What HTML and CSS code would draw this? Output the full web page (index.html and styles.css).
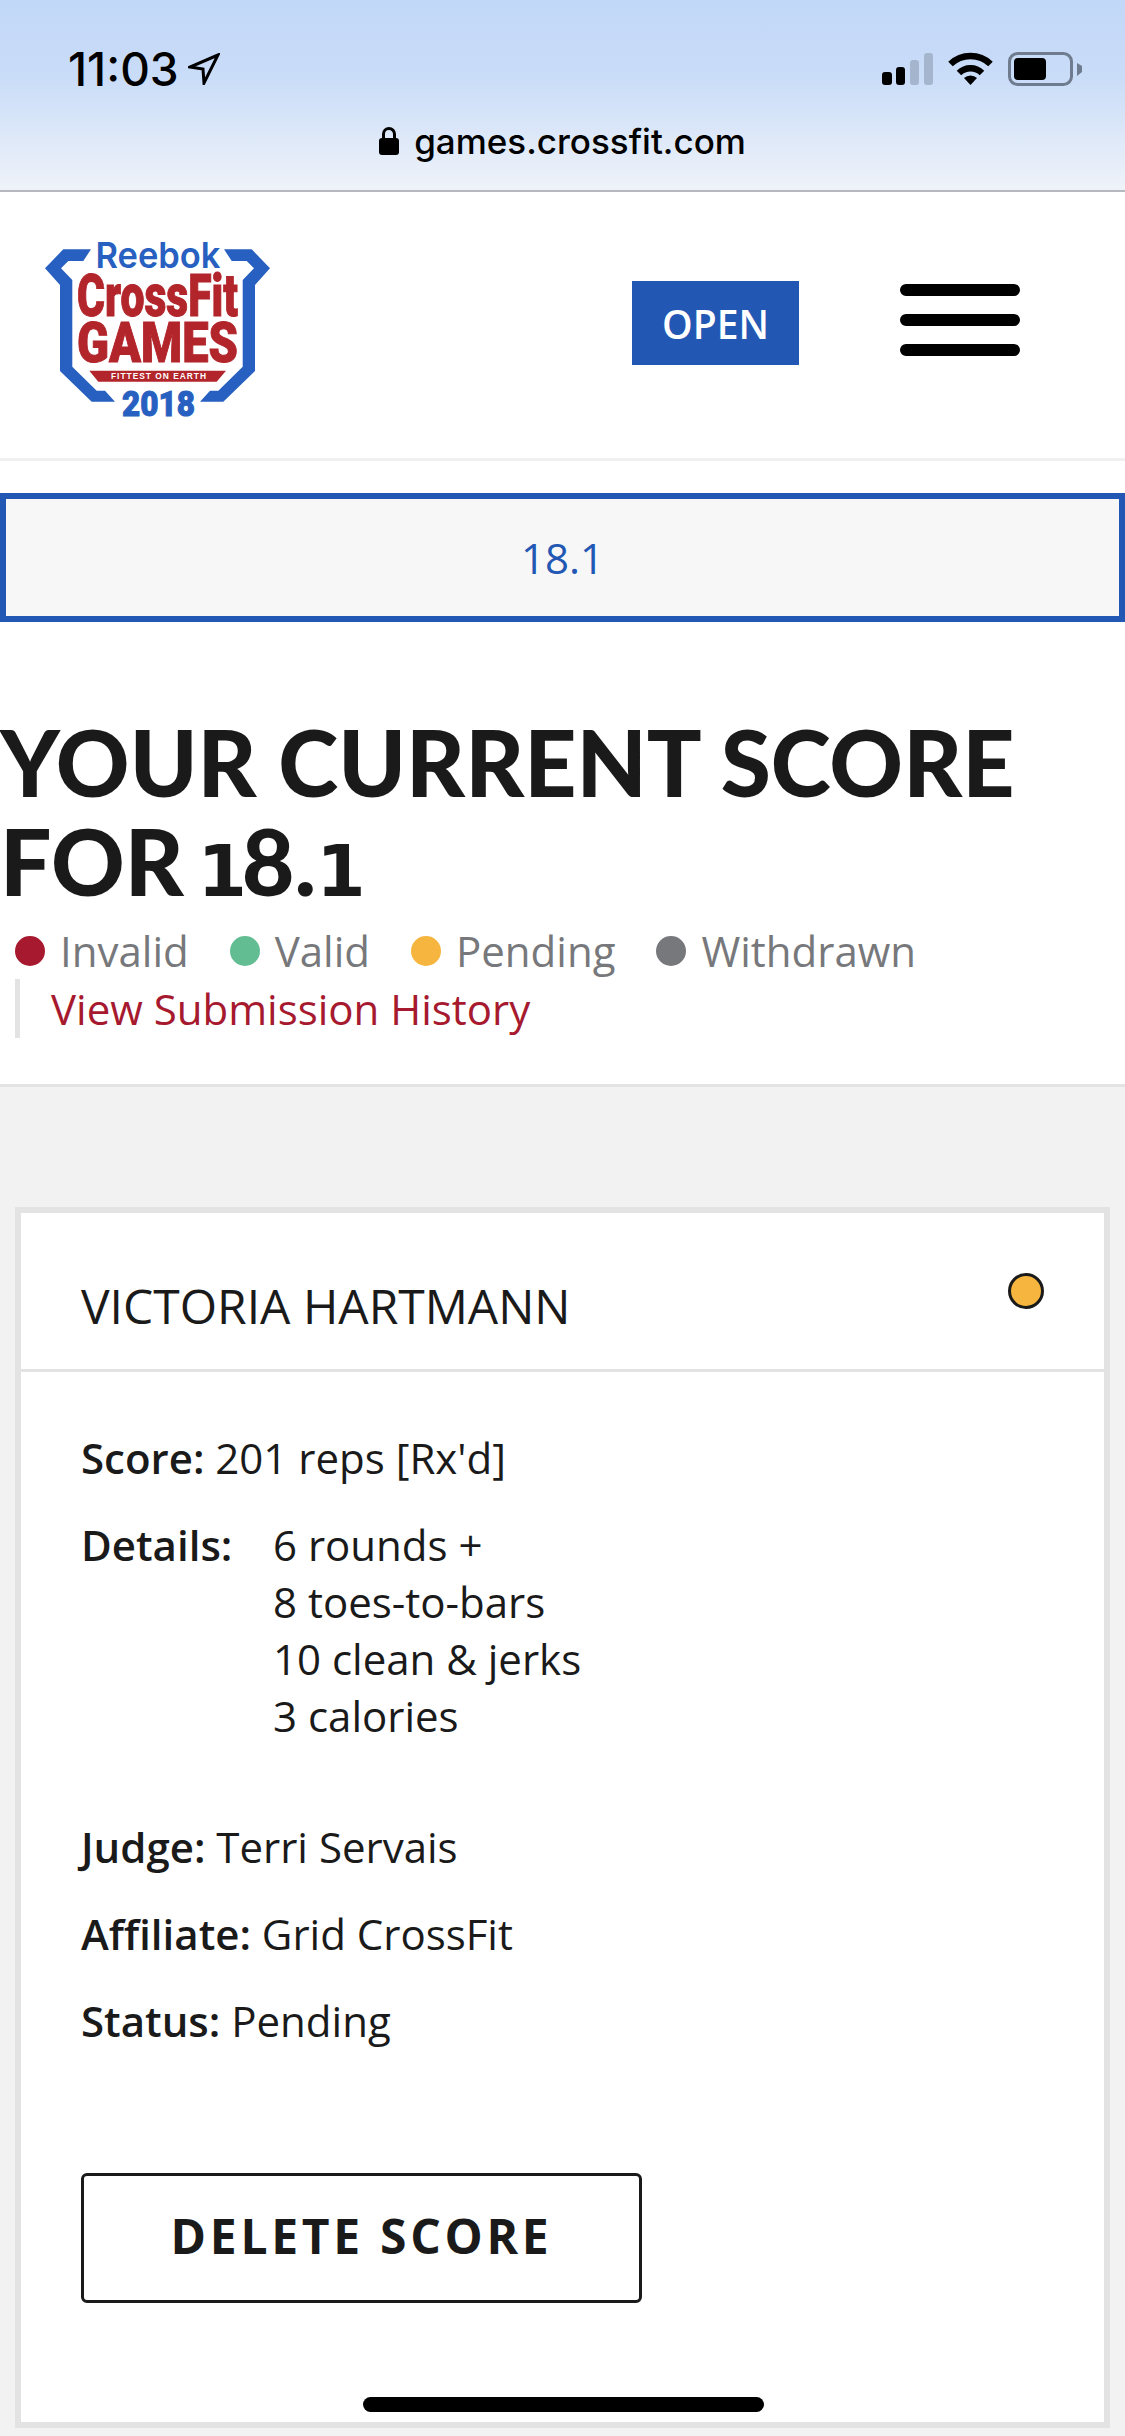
FILE: index.html
```html
<!DOCTYPE html>
<html lang="en">
<head>
  <meta charset="UTF-8">
  <title>CrossFit Games</title>
  <link rel="stylesheet" href="styles.css">
</head>
<body>
  <div class="browser-bar">
    <div class="status-row">
      <div class="clock">
        <span>11:03</span>
        <svg class="arrow" width="32" height="32" viewBox="0 0 32 32"><path d="M30 2 L2 14 L15 16 L16 30 Z" fill="none" stroke="#000" stroke-width="3"/></svg>
      </div>
      <div class="status-icons">
        <svg width="51" height="34" viewBox="0 0 51 34">
          <rect x="0" y="20" width="10" height="13" rx="3" fill="#000"/>
          <rect x="14" y="15" width="9" height="18" rx="3" fill="#000"/>
          <rect x="28" y="8" width="9" height="25" rx="3" fill="#a4b5cd"/>
          <rect x="42" y="1" width="9" height="32" rx="3" fill="#a4b5cd"/>
        </svg>
        <svg width="45" height="34" viewBox="0 0 45 34">
          <path d="M22.5 33 L16 26 A9.5 9.5 0 0 1 29 26 Z" fill="#000"/>
          <path d="M11 21 A16.5 16.5 0 0 1 34 21" fill="none" stroke="#000" stroke-width="6.5"/>
          <path d="M2.5 12 A29 29 0 0 1 42.5 12" fill="none" stroke="#000" stroke-width="6.5"/>
        </svg>
        <svg width="74" height="34" viewBox="0 0 74 34">
          <rect x="1.5" y="1.5" width="62" height="31" rx="8" fill="none" stroke="#6f7b8e" stroke-width="3"/>
          <rect x="6" y="6" width="32" height="22" rx="4" fill="#000"/>
          <path d="M69 11 L74 14 V20 L69 24 Z" fill="#6f7b8e"/>
        </svg>
      </div>
    </div>
    <div class="url-row">
      <svg width="20" height="28" viewBox="0 0 20 28">
        <rect x="0" y="11" width="20" height="17" rx="3" fill="#000"/>
        <path d="M4.5 12 V7 A5.5 5.5 0 0 1 15.5 7 V12" fill="none" stroke="#000" stroke-width="3"/>
      </svg>
      <span>games.crossfit.com</span>
    </div>
  </div>

  <header class="site-header">
    <svg class="logo" width="225" height="180" viewBox="0 0 225 180">
      <path id="bracket" d="M18.3 10.3 H46 L38.3 22 H23.3 L16 29.3 L27.3 41 V127.7 L51.7 151.7 H60 L70 162.7 H46.7 L15 132 V46 L0 29.3 Z" fill="#2760c0"/>
      <use href="#bracket" transform="translate(225) scale(-1 1)"/>
      <text class="logo-reebok" x="113" y="29" text-anchor="middle" textLength="125" lengthAdjust="spacingAndGlyphs">Reebok</text>
      <text class="logo-red" x="112.5" y="77" text-anchor="middle" textLength="161" lengthAdjust="spacingAndGlyphs">CrossFit</text>
      <text class="logo-red logo-games" x="112.5" y="123" text-anchor="middle" textLength="161" lengthAdjust="spacingAndGlyphs">GAMES</text>
      <path d="M44.3 131.7 H181 L171.7 142.7 H53.3 Z" fill="#b2252b"/>
      <text class="logo-tag" x="113.5" y="140.3" text-anchor="middle" textLength="95" lengthAdjust="spacing">FITTEST ON EARTH</text>
      <text class="logo-year" x="113.5" y="177" text-anchor="middle" textLength="73" lengthAdjust="spacingAndGlyphs">2018</text>
    </svg>
    <a class="open-btn">OPEN</a>
    <div class="burger"><span></span><span></span><span></span></div>
  </header>

  <div class="tab-box">18.1</div>

  <section class="title-block">
    <h1>YOUR CURRENT SCORE<br>FOR <span class="old-one">1</span>8.<span class="old-one">1</span></h1>
    <ul class="legend">
      <li><i class="dot red"></i>Invalid</li>
      <li><i class="dot green"></i>Valid</li>
      <li><i class="dot yellow"></i>Pending</li>
      <li><i class="dot grey"></i>Withdrawn</li>
    </ul>
    <a class="history">View Submission History</a>
  </section>

  <main class="content">
    <div class="card">
      <div class="card-head">
        <span>VICTORIA HARTMANN</span>
        <i class="status-dot"></i>
      </div>
      <div class="card-body">
        <p class="row"><b>Score:</b> 201 reps [Rx'd]</p>
        <div class="row details">
          <b>Details:</b>
          <div>6 rounds +<br>8 toes-to-bars<br>10 clean &amp; jerks<br>3 calories</div>
        </div>
        <p class="row"><b>Judge:</b> Terri Servais</p>
        <p class="row"><b>Affiliate:</b> Grid CrossFit</p>
        <p class="row"><b>Status:</b> Pending</p>
        <button class="delete-btn">DELETE SCORE</button>
      </div>
    </div>
  </main>

  <div class="home-bar"></div>
</body>
</html>
```

FILE: styles.css
```css
* {
  box-sizing: border-box;
}

html, body {
  margin: 0;
  height: 2436px;
  overflow: hidden;
}

body {
  position: relative;
  font-family: 'Open Sans', sans-serif;
  background: #fff;
  color: #1a1a1a;
  display: flex;
  flex-direction: column;
}

.browser-bar {
  height: 192px;
  background: linear-gradient(#c2d8f8, #c9dcf8 40%, #eff3f9);
  border-bottom: 2px solid #b5b8bc;
  font-family: Inter, sans-serif;
  color: #000;
}

.status-row {
  display: flex;
  justify-content: space-between;
  align-items: center;
  padding: 50px 43px 0 68px;
  height: 88px;
}

.clock {
  display: flex;
  align-items: center;
  gap: 9px;
  font-size: 46px;
  font-weight: 550;
}

.status-icons {
  display: flex;
  align-items: center;
  gap: 15px;
}

.url-row {
  display: flex;
  justify-content: center;
  align-items: center;
  gap: 15px;
  margin-top: 32px;
  font-size: 35px;
  font-weight: 500;
}

.site-header {
  height: 269px;
  display: flex;
  align-items: flex-start;
  padding: 47px 105px 0 45px;
  border-bottom: 3px solid #f0f0f0;
}

.logo {
  margin-right: 362px;
}

.logo-reebok {
  font: 600 36px Inter, sans-serif;
  fill: #2760c0;
}

.logo-red {
  font: 900 59px Roboto, sans-serif;
  fill: #b2252b;
  stroke: #b2252b;
  stroke-width: 1;
}

.logo-games {
  font-size: 55px;
}

.logo-tag {
  font: 700 8.4px 'Liberation Sans', sans-serif;
  fill: #fff;
}

.logo-year {
  font: 900 35px Roboto, sans-serif;
  fill: #2760c0;
  stroke: #2760c0;
  stroke-width: 1;
}

.open-btn {
  width: 167px;
  height: 84px;
  margin-right: 101px;
  margin-top: 42px;
  background: #2257b3;
  color: #fff;
  font-size: 39px;
  font-weight: 600;
  display: flex;
  align-items: center;
  justify-content: center;
}

.burger {
  width: 120px;
  margin-top: 45px;
  display: flex;
  flex-direction: column;
  gap: 18px;
}

.burger span {
  height: 12px;
  background: #000;
  border-radius: 6px;
}

.tab-box {
  height: 129px;
  margin-top: 32px;
  border: 6px solid #2257b3;
  background: #f7f7f7;
  color: #2257b3;
  font-size: 42px;
  display: flex;
  align-items: center;
  justify-content: center;
}

.title-block {
  height: 465px;
  padding-top: 90px;
  border-bottom: 3px solid #e3e3e3;
}

h1 {
  margin: 0 0 12px;
  font-family: Lato, sans-serif;
  font-size: 91px;
  font-weight: 900;
  line-height: 99px;
  color: #1a1a1a;
}

/* the numerals in the heading are old-style: a short footed 1 */
.old-one {
  font-family: 'DejaVu Sans', sans-serif;
  font-size: 71px;
  font-weight: 700;
  line-height: 1;
  letter-spacing: -5px;
}

.old-one:first-of-type {
  margin-left: -8px;
}

.legend {
  list-style: none;
  margin: 0;
  padding: 0 0 0 15px;
  display: flex;
  gap: 41px;
  color: #77787b;
  font-size: 42px;
  line-height: 57px;
}

.legend li {
  display: flex;
  align-items: center;
  gap: 15px;
}

.dot {
  width: 30px;
  height: 30px;
  border-radius: 50%;
}

.red { background: #a6192e; }
.green { background: #62bd93; }
.yellow { background: #f5b53f; }
.grey { background: #77787b; }

.history {
  display: block;
  margin-left: 15px;
  padding-left: 31px;
  border-left: 5px solid #e3e3e3;
  color: #a6192e;
  font-size: 42px;
  line-height: 59px;
}

.content {
  flex: 1;
  background: #f2f2f2;
  padding: 120px 15px 8px;
}

.card {
  height: 100%;
  background: #fff;
  border: 6px solid #e3e3e3;
}

.card-head {
  height: 159px;
  padding: 60px 60px 0;
  border-bottom: 3px solid #e3e3e3;
  display: flex;
  justify-content: space-between;
  font-size: 48px;
}

.status-dot {
  width: 36px;
  height: 36px;
  border-radius: 50%;
  background: #f5b53f;
  border: 3px solid #1a1a1a;
}

.card-body {
  padding: 57px 60px 0;
  font-size: 42px;
  line-height: 57px;
}

.row {
  margin: 0 0 30px;
}

.row b {
  font-weight: 600;
}

.details {
  display: flex;
  margin-bottom: 74px;
}

.details b {
  width: 192px;
}

.delete-btn {
  display: block;
  width: 561px;
  height: 130px;
  margin-top: 124px;
  padding-bottom: 6px;
  background: #fff;
  border: 3px solid #1a1a1a;
  border-radius: 6px;
  color: #1a1a1a;
  font-family: 'Open Sans', sans-serif;
  font-size: 48px;
  font-weight: 700;
  letter-spacing: 3.7px;
}

.home-bar {
  position: absolute;
  left: 363px;
  top: 2397px;
  width: 401px;
  height: 15px;
  background: #000;
  border-radius: 8px;
}
```
